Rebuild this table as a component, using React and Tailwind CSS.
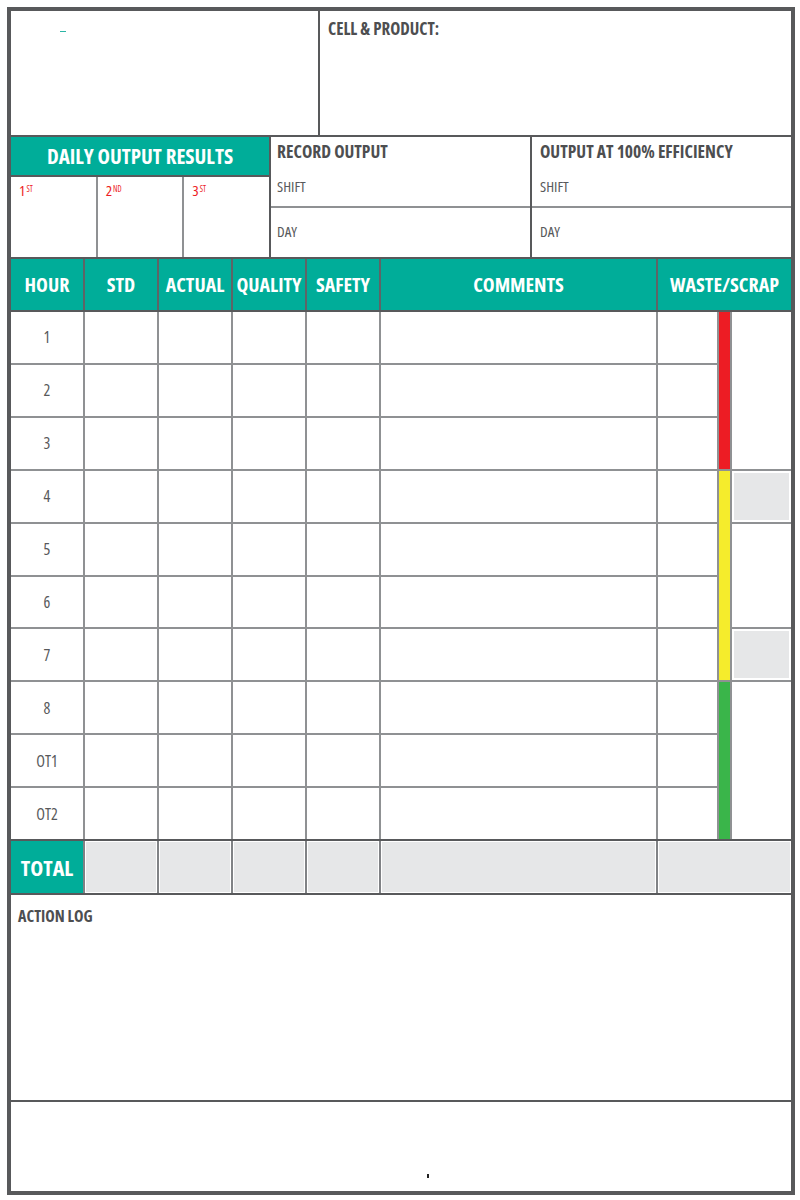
const COLS = "grid grid-cols-[72px_72px_72px_72px_72px_275px_59px_11px_1fr]";
const hours = ["1", "2", "3", "4", "5", "6", "7", "8", "OT1", "OT2"];

function BodyRow({ label, row }) {
  const r = { gridRow: `${row} / span 1` };
  return (
    <>
      <div style={r} className="bg-white flex items-center justify-center text-[16px] font-normal text-[#58595b]">
        {label}
      </div>
      <div style={r} className="bg-white" />
      <div style={r} className="bg-white" />
      <div style={r} className="bg-white" />
      <div style={r} className="bg-white" />
      <div style={r} className="bg-white" />
      <div style={r} className="bg-white" />
    </>
  );
}

export default function App() {
  return (
    <div className="w-[800px] h-[1200px] bg-white pt-[7px] pl-[7px] font-['Open_Sans',sans-serif] font-stretch-condensed">
      <div className="w-[788px] h-[1188px] border-[4px] border-[#58595b] flex flex-col">
        {/* Top section */}
        <div className="h-[126px] flex border-b-2 border-[#58595b] shrink-0">
          <div className="w-[309px] border-r-2 border-[#58595b] pt-[20px] pl-[49px]">
            <div className="w-[6px] h-[1px] bg-[#2bb5a5]" />
          </div>
          <div className="flex-1 pl-[8px] pt-[8px]">
            <div className="text-[17px] leading-[20px] font-bold text-[#4d4e50]">CELL &amp; PRODUCT:</div>
          </div>
        </div>

        {/* Row 2 */}
        <div className="h-[122px] flex border-b-2 border-[#58595b] shrink-0">
          <div className="w-[260px] border-r-2 border-[#58595b] flex flex-col">
            <div className="h-[40px] bg-[#00ad99] border-b-2 border-[#58595b] flex items-center justify-center text-white font-bold text-[21px] leading-none">
              DAILY OUTPUT RESULTS
            </div>
            <div className="flex-1 grid grid-cols-3 gap-[2px] bg-[#8f9193]">
              {[
                ["1", "ST"],
                ["2", "ND"],
                ["3", "ST"],
              ].map(([n, s]) => (
                <div key={n} className="bg-white pl-[8px] pt-[3px] text-[#ed1c24] text-[15px] leading-[18px] font-normal">
                  {n}
                  <span className="text-[8px] font-normal align-[4px] ml-[1px]">{s}</span>
                </div>
              ))}
            </div>
          </div>
          {[
            ["RECORD OUTPUT", "w-[261px] border-r-2 border-[#58595b]", "pl-[6px]"],
            ["OUTPUT AT 100% EFFICIENCY", "flex-1", "pl-[8px]"],
          ].map(([t, cls, pl]) => (
            <div key={t} className={`${cls} flex flex-col`}>
              <div className={`h-[71px] border-b-2 border-[#8f9193] ${pl} pt-[3px]`}>
                <div className="text-[17.5px] leading-[22px] font-bold text-[#4d4e50]">{t}</div>
                <div className="mt-[15px] text-[15px] leading-[18px] font-normal text-[#58595b]">SHIFT</div>
              </div>
              <div className={`flex-1 ${pl} pt-[14px] text-[15px] leading-[18px] font-normal text-[#58595b]`}>DAY</div>
            </div>
          ))}
        </div>

        {/* Header */}
        <div className={`${COLS} gap-[2px] bg-[#5f6466] h-[53px] border-b-2 border-[#58595b] shrink-0`}>
          {["HOUR", "STD", "ACTUAL", "QUALITY", "SAFETY", "COMMENTS"].map((h) => (
            <div key={h} className="bg-[#00ad99] flex items-center justify-center text-white font-bold text-[20px] leading-none">
              {h}
            </div>
          ))}
          <div className="col-span-3 bg-[#00ad99] flex items-center justify-center text-white font-bold text-[20px] leading-none">
            WASTE/SCRAP
          </div>
        </div>

        {/* Body */}
        <div className={`${COLS} grid-rows-[repeat(10,minmax(0,1fr))] gap-[2px] bg-[#8f9193] h-[529px] border-b-2 border-[#58595b] shrink-0`}>
          {hours.map((h, i) => (
            <BodyRow key={h} label={h} row={i + 1} />
          ))}
          <div className="col-start-8 row-start-1 row-span-3 bg-[#ed1c24]" />
          <div className="col-start-8 row-start-4 row-span-4 bg-[#f5ec2c]" />
          <div className="col-start-8 row-start-8 row-span-3 bg-[#3ab54a]" />
          <div className="col-start-9 row-start-1 row-span-3 bg-white" />
          <div className="col-start-9 row-start-4 row-span-1 bg-[#e6e7e8] border-2 border-white" />
          <div className="col-start-9 row-start-5 row-span-2 bg-white" />
          <div className="col-start-9 row-start-7 row-span-1 bg-[#e6e7e8] border-2 border-white" />
          <div className="col-start-9 row-start-8 row-span-3 bg-white" />
        </div>

        {/* Total */}
        <div className={`${COLS} gap-[2px] bg-[#808285] h-[54px] border-b-2 border-[#58595b] shrink-0`}>
          <div className="bg-[#00ad99] flex items-center justify-center text-white font-bold text-[22px] leading-none">
            TOTAL
          </div>
          <div className="bg-[#e6e7e8] border border-white" />
          <div className="bg-[#e6e7e8] border border-white" />
          <div className="bg-[#e6e7e8] border border-white" />
          <div className="bg-[#e6e7e8] border border-white" />
          <div className="bg-[#e6e7e8] border border-white" />
          <div className="col-span-3 bg-[#e6e7e8] border border-white" />
        </div>

        {/* Action log */}
        <div className="h-[207px] border-b-2 border-[#58595b] pl-[7px] pt-[11px] shrink-0">
          <div className="text-[16px] leading-[20px] font-bold text-[#4d4e50]">ACTION LOG</div>
        </div>

        {/* Bottom */}
        <div className="flex-1 pl-[416px] pt-[72px]">
          <div className="w-[2px] h-[4px] bg-[#222]" />
        </div>
      </div>
    </div>
  );
}
